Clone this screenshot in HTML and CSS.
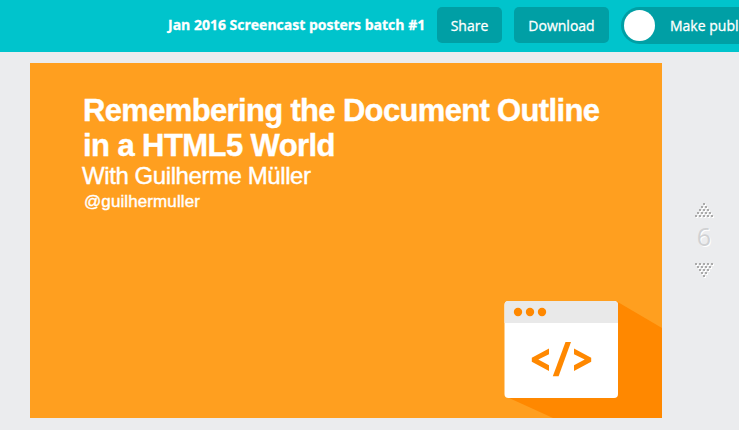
FILE: index.html
```html
<!DOCTYPE html>
<html lang="en">
<head>
<meta charset="utf-8">
<title>Jan 2016 Screencast posters batch #1</title>
<link rel="stylesheet" href="styles.css">
</head>
<body>
<header class="toolbar">
  <span class="doc-title">Jan 2016 Screencast posters batch #1</span>
  <button class="btn share">Share</button>
  <button class="btn download">Download</button>
  <button class="toggle"><span class="knob"></span><span class="toggle-label">Make public</span></button>
</header>
<main class="workspace">
  <section class="poster">
    <div class="copy">
      <h1><span class="line-one">Remembering the Document Outline</span><br><span class="line-two">in a HTML5 World</span></h1>
      <p class="author">With Guilherme Müller</p>
      <p class="handle">@guilhermuller</p>
    </div>
    <svg class="art" width="158" height="118" viewBox="0 0 158 118">
      <path d="M112 1L158 28V118H49L3 97Z" fill="#ff8800"/>
      <rect x="0.5" y="1" width="113.500" height="97" rx="4" fill="#fff"/>
      <path d="M0.500 23V5a4 4 0 0 1 4-4H110a4 4 0 0 1 4 4V23Z" fill="#e9e9e9"/>
      <g fill="#ff8800">
        <circle cx="14" cy="12" r="4.200"/><circle cx="26" cy="12" r="4.200"/><circle cx="38" cy="12" r="4.200"/>
        <path d="M45 48.500V54.200L34.300 59.600L45 65.200V71L27.800 61.800V57.700Z"/>
        <path d="M61.500 42H67L54.600 76.300H48.800Z"/>
        <path d="M70 48.500V54.200L80.700 59.600L70 65.200V71L87.200 61.800V57.700Z"/>
      </g>
    </svg>
  </section>
  <aside class="pager">
    <svg width="19" height="15" viewBox="0 0 19 15">
      <defs>
        <path id="dots" d="M8 0h2v2h-2zM6 3h2v2h-2zM10 3h2v2h-2zM4 6h2v2h-2zM8 6h2v2h-2zM12 6h2v2h-2zM2 9h2v2h-2zM6 9h2v2h-2zM10 9h2v2h-2zM14 9h2v2h-2zM0 12h2v2h-2zM4 12h2v2h-2zM8 12h2v2h-2zM12 12h2v2h-2zM16 12h2v2h-2z"/>
      </defs>
      <use href="#dots" x="1" y="1" fill="#fff"/><use href="#dots" fill="#aaa"/>
    </svg>
    <span class="page-number">6</span>
    <svg width="19" height="15" viewBox="0 0 19 15">
      <use href="#dots" transform="translate(1 15) scale(1 -1)" fill="#fff"/><use href="#dots" transform="translate(0 14) scale(1 -1)" fill="#aaa"/>
    </svg>
  </aside>
</main>
</body>
</html>
```

FILE: styles.css
```css
* { box-sizing: border-box; }
body {
  margin: 0;
  height: 430px;
  overflow: hidden;
  background: #ebecee;
  font-family: "Open Sans", sans-serif;
}
.toolbar {
  display: flex;
  align-items: flex-start;
  height: 52px;
  padding: 7px 0 0 168px;
  background: #00c4cc;
  color: #fff;
  overflow: hidden;
  white-space: nowrap;
}
.doc-title {
  flex: 0 0 269px;
  font-size: 14px;
  font-weight: 700;
  line-height: 36px;
  -webkit-text-stroke: 0.3px #fff;
}
.btn, .toggle {
  flex: none;
  height: 36px;
  border: 0;
  padding: 0;
  background: #009fa5;
  color: #fff;
  font: 14px/36px "Open Sans", sans-serif;
  -webkit-text-stroke: 0.3px #fff;
}
.btn { border-radius: 5px; padding-top: 2px; line-height: 34px; }
.share { width: 65px; margin-right: 12px; }
.download { width: 95px; margin-right: 12px; }
.toggle {
  display: flex;
  align-items: center;
  width: 150px;
  height: 37px;
  padding-left: 3px;
  border-radius: 19px;
}
.knob {
  width: 31px;
  height: 31px;
  margin-right: 15px;
  border-radius: 50%;
  background: #fff;
}
.workspace {
  display: flex;
  padding: 11px 0 0 30px;
}
.poster {
  display: flex;
  flex-direction: column;
  justify-content: space-between;
  width: 632px;
  height: 355px;
  background: #ff9f1f;
  color: #fff;
  font-family: "Liberation Sans", sans-serif;
}
.copy { padding: 30px 0 0 53px; white-space: nowrap; }
h1, p { margin: 0; }
h1 { font-size: 31px; line-height: 35px; letter-spacing: -0.66px; -webkit-text-stroke: 0.4px #fff; }
.line-two { letter-spacing: -0.58px; }
.author { margin-left: -1px; font-size: 24px; line-height: 26px; letter-spacing: -0.42px; -webkit-text-stroke: 0.4px #fff; }
.handle { margin-left: 1px; font-size: 17px; line-height: 26px; letter-spacing: 0.1px; -webkit-text-stroke: 0.4px #fff; }
.art { align-self: flex-end; display: block; }
.pager {
  display: flex;
  flex-direction: column;
  align-items: center;
  width: 77px;
  padding: 140px 0 0 7px;
}
.page-number {
  height: 45px;
  line-height: 37px;
  font-size: 25px;
  color: #d0d1d3;
  text-shadow: 1px 1px 0 #fff;
}
```
